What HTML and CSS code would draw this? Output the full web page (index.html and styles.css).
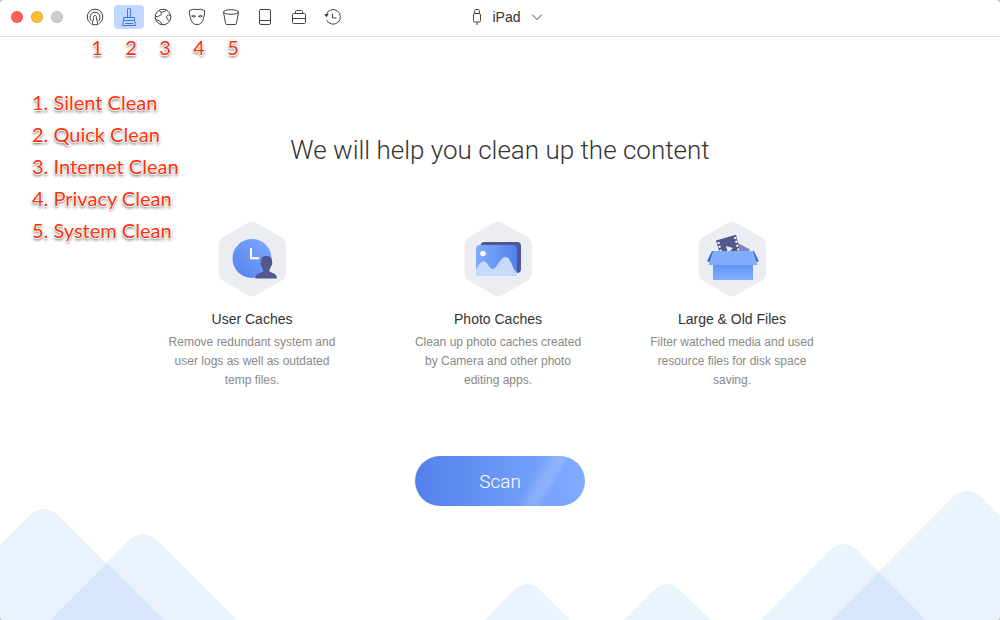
FILE: index.html
```html
<!DOCTYPE html>
<html lang="en">
<head>
    <meta charset="UTF-8">
    <title>Quick Clean</title>
    <link rel="stylesheet" href="styles.css">
</head>
<body>
<div id="window">
    <header id="toolbar">
        <div class="toolbar-left">
            <div class="lights">
                <button class="light close" aria-label="Close"></button>
                <button class="light minimize" aria-label="Minimize"></button>
                <button class="light zoom" aria-label="Zoom"></button>
            </div>
            <nav class="tools">
                <button class="tool" aria-label="Silent Clean">
                    <svg viewBox="0 0 18 18"><path d="M4.800 15.500a7.800 7.800 0 1 1 8.400 0"/><path d="M5.300 12.600a5 5 0 1 1 7.400 0"/><path d="M9 7.500a1.500 1.500 0 0 1 1.300 2.200l1.700 7H6l1.700-7A1.500 1.500 0 0 1 9 7.500z"/></svg>
                </button>
                <button class="tool active" aria-label="Quick Clean">
                    <svg viewBox="0 0 18 18"><path d="M7.500 9.500V1.200q0-1 1.500-1t1.500 1v8.300M3.500 9.500h11v3h-11zM3.500 12.500l-1 5h13l-1-5M5 15.500h8"/></svg>
                </button>
                <button class="tool" aria-label="Internet Clean">
                    <svg viewBox="0 0 18 18"><circle cx="9" cy="9" r="7.800"/><path d="M5 2.400l2.200 1.800 3.300-.6 1.600-1.800M7.200 4.200l.2 2.400-3.600 2H1.500M16.500 7.500l-2.300-.7-1.800 2 .9 2.300 1.800 1.600M2.200 12l2.800.5 3.500 4.200"/></svg>
                </button>
                <button class="tool" aria-label="Privacy Clean">
                    <svg viewBox="0 0 18 18"><path d="M1.500 2.500Q5.500.3 9 1.700q3.500-1.400 7.500.8.5 3-.8 7Q14.300 16.600 9 16.600T2.300 9.500q-1.300-4-.8-7z"/><path d="M3.700 8.200q1.900-1.700 3.900.2-2 1.400-3.900-.2zM14.300 8.200q-1.900-1.700-3.900.2 2 1.400 3.900-.2z"/></svg>
                </button>
                <button class="tool" aria-label="System Clean">
                    <svg viewBox="0 0 18 18"><ellipse cx="9" cy="4" rx="7.500" ry="2.300"/><path d="M1.500 4l2 11.300q.2 1.200 1.500 1.200h8q1.300 0 1.500-1.200l2-11.300"/></svg>
                </button>
                <button class="tool" aria-label="Device">
                    <svg viewBox="0 0 18 18"><rect x="3.500" y="1.500" width="11" height="15" rx="1.500"/><path d="M3.500 12.500h11"/></svg>
                </button>
                <button class="tool" aria-label="Toolbox">
                    <svg viewBox="0 0 18 18"><path d="M5.500 5V3.500q0-1 1-1h5q1 0 1 1V5"/><rect x="2.500" y="5.500" width="13" height="10" rx="1"/><path d="M2.500 10.500h13"/></svg>
                </button>
                <button class="tool" aria-label="History">
                    <svg viewBox="0 0 18 18"><path d="M2.200 6.500A7.300 7.300 0 1 1 2.500 12M8.500 5.500v4.500h4"/><path class="solid" d="M.3 6.200l4.400-.4-2.200 3.500z"/></svg>
                </button>
            </nav>
        </div>
        <button class="device">
            <svg class="plug" viewBox="0 0 10 18"><rect x="1.500" y="5.500" width="7" height="8.500" rx="1.500"/><path d="M2.700 5.500v-3q0-1 1-1h2.600q1 0 1 1v3M5 14v3"/></svg>
            <span>iPad</span>
            <svg class="chevron" viewBox="0 0 12 8"><path d="M1 1.500l5 5 5-5"/></svg>
        </button>
    </header>

    <main id="content">
        <h1>We will help you clean up the content</h1>
        <section class="features">
            <article class="feature">
                <svg class="badge" viewBox="0 0 68 76">
                    <defs>
                        <linearGradient id="blue" x1="0" y1="1" x2="1" y2="0"><stop offset="0" stop-color="#5480ed"/><stop offset="1" stop-color="#7fabff"/></linearGradient>
                        <linearGradient id="blue-left" x1="0" y1="0" x2="1" y2="0"><stop offset="0" stop-color="#7fabff"/><stop offset="1" stop-color="#5480ed"/></linearGradient>
                        <linearGradient id="blue-down" x1="0" y1="0" x2="0" y2="1"><stop offset="0" stop-color="#6593f7"/><stop offset="1" stop-color="#82b0ff"/></linearGradient>
                        <path id="hex" d="M29 2.200q5-3 10 0l24.500 14q4.500 2.800 4.500 8v27.600q0 5.200-4.500 8L39 73.800q-5 3-10 0L5 59.800q-4.500-2.800-4.500-8V24.200q0-5.200 4.500-8z"/>
                    </defs>
                    <use href="#hex" fill="#ecedf3"/>
                    <circle cx="34" cy="37.500" r="19.500" fill="url(#blue)"/>
                    <path d="M33 27v10.300h8" fill="none" stroke="#fff" stroke-width="2"/>
                    <path d="M48.500 35c4 0 5.900 2.700 5.600 6.500.6 1.400.1 2.500-.8 3.200-.4 1.700-1 2.700-1.800 3.600v2.200c2 1.500 7.500 1.500 7.500 7H37.300c0-5.500 5.900-5.500 7.900-7v-2.200c-.8-.9-1.400-1.900-1.800-3.600-.9-.7-1.300-1.800-.7-3.200-.3-3.800 1.800-6.500 5.800-6.500z" fill="#53588c"/>
                </svg>
                <h2>User Caches</h2>
                <p>Remove redundant system and user logs as well as outdated temp files.</p>
            </article>
            <article class="feature">
                <svg class="badge" viewBox="0 0 68 76">
                    <use href="#hex" fill="#ecedf3"/>
                    <rect x="16.500" y="21" width="40.500" height="31" rx="4" fill="#53588c"/>
                    <rect x="12" y="24" width="41" height="31" rx="4" fill="url(#blue-left)"/>
                    <circle cx="19" cy="32.500" r="2.800" fill="#fff"/>
                    <path d="M12 49c4-9 8-11 11-6.500 3 5 6 8 10 2 5-8 9-11.500 13-5 3 5 3 9 7 12-.3 2.300-1.700 3.500-4 3.500H16q-4 0-4-4z" fill="#c8d9fe"/>
                </svg>
                <h2>Photo Caches</h2>
                <p>Clean up photo caches created by Camera and other photo editing apps.</p>
            </article>
            <article class="feature">
                <svg class="badge" viewBox="0 0 68 76">
                    <use href="#hex" fill="#ecedf3"/>
                    <path d="M35 19.500l17 9-6 8H30z" fill="#8286b8"/>
                    <path d="M18 19.500l20-5.700 4.500 18.200L23 37z" fill="#53588c"/>
                    <path d="M20.300 21l2.500 9.500M37 16l4 15" stroke="#fff" stroke-width="2" stroke-dasharray="2 2"/>
                    <path d="M28 25l7 2-5 5z" fill="#ecedf3"/>
                    <path d="M14 30L9 40.500l4 .5 7-11zM56 30l5 10.500-4 .5-6-11z" fill="#3865c8"/>
                    <path d="M15 44h40v15H15z" fill="url(#blue-down)"/>
                    <path d="M15 30h40l4.500 14h-49z" fill="#80adfd"/>
                </svg>
                <h2>Large &amp; Old Files</h2>
                <p>Filter watched media and used resource files for disk space saving.</p>
            </article>
        </section>
        <button id="scan">Scan</button>
    </main>

    <svg id="hills" viewBox="0 0 1000 130">
        <g fill="#eaf2fc">
            <path d="M0 55l29-29q15-14 30 0l104 104H0z"/>
            <path d="M50 130l78-79q15-14 30 0l79 79z"/>
            <path d="M485 130l29-30q13-12 26 0l30 30z"/>
            <path d="M624 130l30-30q13-12 26 0l31 30z"/>
            <path d="M761 130l69-70q13-12 27 0l69 70z"/>
            <path d="M831 130L953 7q14-12 28 0l19 19v104z"/>
        </g>
        <path d="M107 73l57 57H50zM879 82l47 48h-95z" fill="#d8e6fd"/>
    </svg>

    <div id="notes">
        <div class="marks">
            <span>1</span>
            <span>2</span>
            <span>3</span>
            <span>4</span>
            <span>5</span>
        </div>
        <ul class="legend">
            <li>1. Silent Clean</li>
            <li>2. Quick Clean</li>
            <li>3. Internet Clean</li>
            <li>4. Privacy Clean</li>
            <li>5. System Clean</li>
        </ul>
    </div>
</div>
</body>
</html>
```
FILE: styles.css
```css
*{
    margin: 0;
    padding: 0;
    box-sizing: border-box;
}
ul{
    list-style: none;
}
button{
    border: 0;
    background: none;
    font: inherit;
    color: inherit;
    cursor: pointer;
}
body{
    background: #b8b8b8;
    color: #333;
    font-family: "Helvetica Neue", "Liberation Sans", Arial, sans-serif;
}
#window{
    position: relative;
    min-height: 100vh;
    background: #fff;
    border-radius: 4px;
    overflow: hidden;
}

/* toolbar */
#toolbar{
    display: grid;
    grid-template-columns: 1fr auto 1fr;
    align-items: center;
    padding: 5px 0 7px 11px;
    border-bottom: 1px solid #e1e1e1;
}
.toolbar-left, .lights, .tools, .device{
    display: flex;
    align-items: center;
}
.toolbar-left{
    gap: 17px;
}
.lights{
    gap: 8px;
}
.light{
    width: 12px;
    height: 12px;
    border-radius: 50%;
    border: 1px solid #0000001a;
}
.close{
    background: #ff5f57;
}
.minimize{
    background: #fdbc2e;
}
.zoom{
    background: #cecece;
}
.tools{
    gap: 4px;
}
.tool{
    display: flex;
    align-items: center;
    justify-content: center;
    width: 30px;
    height: 24px;
    border-radius: 4px;
}
.tool svg{
    width: 18px;
    height: 18px;
}
#toolbar svg{
    fill: none;
    stroke: #444;
    stroke-width: 1;
}
#toolbar .solid{
    fill: #333;
    stroke: none;
}
#toolbar .active{
    background: #c0d7ff;
}
#toolbar .active svg{
    stroke: #4377dc;
}
.device{
    gap: 10px;
    padding-left: 4px;
    font-size: 14px;
}
.plug{
    width: 10px;
    height: 18px;
}
.chevron{
    width: 12px;
    height: 8px;
}

/* content */
#content{
    display: flex;
    flex-direction: column;
    align-items: center;
    padding: 96px 20px;
    text-align: center;
}
h1{
    font-family: "Helvetica Neue", Roboto, sans-serif;
    font-size: 26px;
    font-weight: 300;
    line-height: 34px;
}
.features{
    display: grid;
    grid-template-columns: 200px 176px 176px;
    gap: 58px;
    margin-top: 54px;
    padding-right: 28px;
}
.feature{
    display: flex;
    flex-direction: column;
    align-items: center;
}
.badge{
    width: 68px;
    height: 76px;
}
h2{
    margin-top: 12px;
    font-size: 14px;
    font-weight: normal;
    line-height: 20px;
}
.feature p{
    width: 176px;
    margin-top: 4px;
    color: #888;
    font-size: 12px;
    line-height: 19px;
}
#scan{
    position: relative;
    z-index: 1;
    width: 170px;
    height: 50px;
    margin-top: 66px;
    border-radius: 25px;
    background: linear-gradient(120deg, transparent 65%, #ffffff26 71%, #ffffff26 75%, transparent 79%), linear-gradient(90deg, #5480ed, #80adff);
    color: #fff;
    font-family: "Helvetica Neue", Roboto, sans-serif;
    font-size: 19px;
    font-weight: 300;
}
#hills{
    position: absolute;
    left: 0;
    bottom: 0;
    width: 100%;
}

/* red notes over the window */
#notes{
    position: absolute;
    top: 36px;
    left: 32px;
    color: #ff2f0a;
    font-family: "Century Gothic", Lato, sans-serif;
    font-size: 20px;
    text-shadow: 1px 0 #fff, -1px 0 #fff, 0 1px #fff, 0 -1px #fff, 0 2px 3px #000000b3;
}
.marks{
    display: flex;
    padding-left: 48px;
    line-height: 22px;
}
.marks span{
    width: 34px;
    text-align: center;
}
.legend{
    margin-top: 28px;
    line-height: 32px;
}
```
